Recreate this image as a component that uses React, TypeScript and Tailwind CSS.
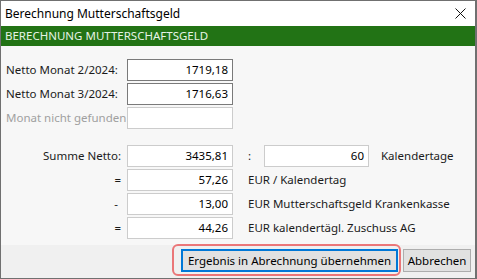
import React from "react";

const font = { fontFamily: '"Noto Sans", "Segoe UI", sans-serif' };

function Box({ value, variant }: { value: string; variant: "edit" | "ro" | "disabled" }) {
  const border =
    variant === "edit" ? "border-[#7a7a7a]" : "border-[#cccccc]";
  return (
    <div
      className={`w-[106px] h-[22px] border ${border} bg-white flex items-center justify-end pr-[4px] text-[11.5px] text-black`}
    >
      {value}
    </div>
  );
}

export default function App() {
  return (
    <div
      style={font}
      className="w-[477px] h-[279px] border border-[#707070] border-r-2 flex flex-col bg-[#f7f7f7] text-[11.5px] leading-none text-[#1b1b1b] overflow-hidden whitespace-nowrap"
    >
      {/* title bar */}
      <div className="h-[25px] bg-white flex items-center justify-between pl-[4px] pr-[9px] shrink-0">
        <span className="text-[12px] text-black">Berechnung Mutterschaftsgeld</span>
        <svg width="11" height="11" viewBox="0 0 11 11" className="block">
          <path d="M0.5 0.5 L10.5 10.5 M10.5 0.5 L0.5 10.5" stroke="#111" strokeWidth="1" />
        </svg>
      </div>
      {/* green header */}
      <div className="h-[20px] bg-[#227315] flex items-center pl-[4px] shrink-0">
        <span className="text-[11.5px] text-[#e6f3e6]">BERECHNUNG MUTTERSCHAFTSGELD</span>
      </div>

      {/* content */}
      <div className="flex-1 flex flex-col pl-[5px] pt-[13px]">
        <div className="flex flex-col gap-[2px]">
          <div className="flex items-center h-[22px]">
            <span className="w-[121px]">Netto Monat 2/2024:</span>
            <Box value="1719,18" variant="edit" />
          </div>
          <div className="flex items-center h-[22px]">
            <span className="w-[121px]">Netto Monat 3/2024:</span>
            <Box value="1716,63" variant="edit" />
          </div>
          <div className="flex items-center h-[22px]">
            <span className="w-[121px] text-[#a0a0a0]">Monat nicht gefunden</span>
            <Box value="" variant="disabled" />
          </div>
        </div>

        <div className="flex flex-col gap-[2px] mt-[16px]">
          <div className="flex items-center h-[22px]">
            <span className="w-[115px] text-right">Summe Netto:</span>
            <span className="w-[6px]" />
            <Box value="3435,81" variant="ro" />
            <span className="w-[15px]" />
            <span className="w-[16px]">:</span>
            <div className="w-[105px] h-[22px] border border-[#cccccc] bg-white flex items-center justify-end pr-[4px] text-black">
              60
            </div>
            <span className="ml-[12px]">Kalendertage</span>
          </div>
          <div className="flex items-center h-[22px]">
            <span className="w-[115px] text-right">=</span>
            <span className="w-[6px]" />
            <Box value="57,26" variant="ro" />
            <span className="ml-[15px]">EUR / Kalendertag</span>
          </div>
          <div className="flex items-center h-[22px]">
            <span className="w-[112px] text-right mr-[3px]">-</span>
            <span className="w-[6px]" />
            <Box value="13,00" variant="ro" />
            <span className="ml-[15px]">EUR Mutterschaftsgeld Krankenkasse</span>
          </div>
          <div className="flex items-center h-[22px]">
            <span className="w-[115px] text-right">=</span>
            <span className="w-[6px]" />
            <Box value="44,26" variant="ro" />
            <span className="ml-[15px]">EUR kalendertägl. Zuschuss AG</span>
          </div>
        </div>
      </div>

      {/* button bar */}
      <div className="h-[33px] bg-[#f0f0f0] flex items-start justify-end pr-[4px] pt-[4px] gap-[5px] shrink-0">
        <div className="relative">
          <div className="w-[217px] h-[23px] bg-[#e1e1e1] border-2 border-[#0078d7] flex items-center justify-center text-black">
            Ergebnis in Abrechnung übernehmen
          </div>
          <div className="absolute left-[-9px] top-[-5px] w-[229px] h-[32px] rounded-[6px] border-2 border-[#e8575a]/80 pointer-events-none" />
        </div>
        <div className="w-[68px] h-[23px] bg-[#e1e1e1] border border-[#adadad] flex items-center justify-center text-black">
          Abbrechen
        </div>
      </div>
    </div>
  );
}
